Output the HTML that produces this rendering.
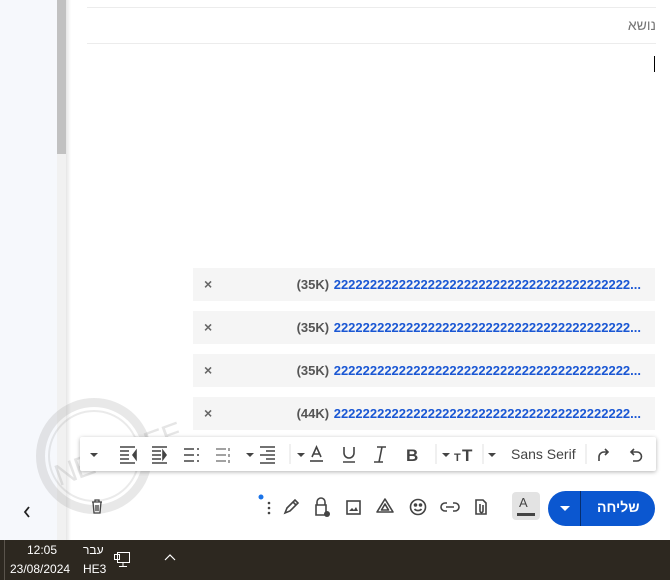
<!DOCTYPE html>
<html><head><meta charset="utf-8"><style>
*{margin:0;padding:0;box-sizing:border-box}
body{width:670px;height:580px;position:relative;overflow:hidden;background:#fff;font-family:"Liberation Sans",Arial,sans-serif}
.a{position:absolute}
.att{position:absolute;left:193px;width:462px;height:33px;background:#f5f5f5;font-size:13px;font-weight:bold}
.att .x{position:absolute;left:11px;top:8px;color:#666;font-size:14px}
.att .t{position:absolute;right:14px;top:9px;white-space:nowrap;color:#1a57d4;direction:ltr}
.att .t span{color:#555;margin-right:1px}
svg{position:absolute}
</style></head><body>
<div class="a" style="left:0;top:0;width:57px;height:540px;background:#f6f8fc"></div>
<div class="a" style="left:57px;top:0;width:10px;height:540px;background:#f1f1f1"></div>
<div class="a" style="left:57px;top:0;width:9px;height:154px;background:#c1c1c1"></div>
<div class="a" style="left:66px;top:0;width:5px;height:540px;background:linear-gradient(90deg,#e6e6e6,#fff)"></div>
<div class="a" style="left:87px;top:7px;width:569px;height:1px;background:#ececec"></div>
<div class="a" style="left:87px;top:43px;width:569px;height:1px;background:#ececec"></div>
<div class="a" style="right:14px;top:17px;font-size:14px;color:#757575;font-family:'Liberation Sans','Noto Sans CJK JP',sans-serif">נושא</div>
<div class="a" style="left:654px;top:56px;width:1px;height:16px;background:#000"></div>

<div class="att" style="top:268px"><div class="x">×</div><div class="t"><span>(35K)</span> 22222222222222222222222222222222222222222...</div></div>
<div class="att" style="top:311px"><div class="x">×</div><div class="t"><span>(35K)</span> 22222222222222222222222222222222222222222...</div></div>
<div class="att" style="top:354px"><div class="x">×</div><div class="t"><span>(35K)</span> 22222222222222222222222222222222222222222...</div></div>
<div class="att" style="top:397px"><div class="x">×</div><div class="t"><span>(44K)</span> 22222222222222222222222222222222222222222...</div></div>

<!-- watermark -->
<div class="a" style="left:36px;top:398px;width:116px;height:116px;border:9px solid rgba(150,150,150,.22);border-radius:50%"></div>
<div class="a" style="left:48px;top:410px;width:92px;height:92px;border:2px solid rgba(150,150,150,.2);border-radius:50%"></div>
<div class="a" style="left:52px;top:438px;font-size:30px;color:rgba(150,150,150,.25);transform:rotate(-20deg);letter-spacing:-1px">NETFREE</div>

<!-- toolbar -->
<div class="a" style="left:80px;top:437px;width:576px;height:34px;background:#fff;box-shadow:0 1px 4px rgba(0,0,0,.3);border-radius:2px"></div>
<svg style="left:80px;top:437px" width="576" height="34" fill="#444" stroke="#444">
<path d="M10 16l4 4 4-4z" stroke="none"/>
<g stroke-width="1.6" fill="none">
<path d="M40 10h15M40 14h9M40 18h9M40 22h9M40 26h15"/><path d="M56 14l-3 4 3 4z" fill="#444"/>
<path d="M72 10h15M72 14h9M72 18h9M72 22h9M72 26h15"/><path d="M83 14l3 4-3 4z" fill="#444"/>
<path d="M104 12h10M104 18h10M104 24h10M117 12h2M117 18h2M117 24h2"/>
<path d="M136 12h10M136 18h10M136 24h10M149 11v3M149 17v3M149 23v3" stroke-width="1"/>
<path d="M180 10h15M186 14h9M180 18h15M186 22h9M180 26h15"/>
<path d="M230 24h13"/><path d="M232 20l4.5-10 4.5 10M233.5 17h6"/>
<path d="M264 10v6a5 5 0 0010 0v-6M263 25h12"/>
<path d="M297 10h9M294 25h9M302 10l-3 15"/>
</g>
<path d="M166 16l4 4 4-4zM217 16l4 4 4-4zM362 16l4 4 4-4zM408 16l4 4 4-4z" stroke="none"/>
<text x="326" y="24" font-size="17" font-weight="bold" stroke="none" font-family="Liberation Sans">B</text>
<text x="382" y="24" font-size="17" font-weight="bold" stroke="none" font-family="Liberation Sans">T</text>
<text x="374" y="24" font-size="11" font-weight="bold" stroke="none" font-family="Liberation Sans">T</text>
<text x="431" y="22" font-size="14" stroke="none" fill="#444" font-family="Liberation Sans">Sans Serif</text>
<path d="M210 7v20M356 7v20M403 7v20M506 7v20" stroke="#e0e0e0"/>
<g fill="none" stroke-width="1.6">
<path d="M519 24v-4a5 5 0 015-5h4M525 12l3 3-3 3"/>
<path d="M554 12l-3 3 3 3M551 15h6a4 4 0 010 9h-4"/>
</g>
</svg>

<!-- bottom row -->
<svg style="left:20px;top:504px" width="14" height="16" fill="none" stroke="#222" stroke-width="1.8"><path d="M9 3l-4 5 4 5"/></svg>
<svg style="left:0;top:490px" width="670" height="40" fill="none" stroke="#444" stroke-width="1.6">
<path d="M92 12h10M95 12v-2h4v2M93 12l1 11h6l1-11M96 15v6M98 15v6" stroke-width="1.3"/>
<circle cx="261" cy="7" r="2.5" fill="#1a73e8" stroke="none"/>
<circle cx="269" cy="13" r="1.3" fill="#444" stroke="none"/><circle cx="269" cy="18" r="1.3" fill="#444" stroke="none"/><circle cx="269" cy="23" r="1.3" fill="#444" stroke="none"/>
<path d="M285 23l2-5 8-8 3 3-8 8z M293 12l3 3"/>
<path d="M317 15v-3a4 4 0 018 0v3M316 15h10v10h-10z"/><circle cx="327" cy="24" r="3" fill="#444" stroke="none"/>
<rect x="347" y="11" width="13" height="13"/><path d="M349 21l3-3 2 2 2-3 2 4z" fill="#444" stroke="none"/>
<path d="M385 9l8 13h-16z M385 14l3.5 6h-7z" stroke-linejoin="round"/>
<circle cx="418" cy="17" r="7.5"/><circle cx="415.5" cy="15" r="1" fill="#444"/><circle cx="420.5" cy="15" r="1" fill="#444"/><path d="M414.5 19a4 3 0 007 0"/>
<path d="M447 13h-2a4 4 0 000 8h2M453 13h2a4 4 0 010 8h-2M446 17h8"/>
<path d="M476 10h7l3 3v11h-10z M480 14v7a1.5 1.5 0 003 0v-6"/>
</svg>
<div class="a" style="left:512px;top:492px;width:28px;height:28px;background:#e3e3e3;border-radius:4px"></div>
<div class="a" style="left:519px;top:495px;font-size:13px;color:#444">A</div>
<div class="a" style="left:517px;top:513px;width:18px;height:3px;background:#444"></div>
<div class="a" style="left:548px;top:491px;width:107px;height:35px;background:#0b57d0;border-radius:18px"></div>
<div class="a" style="left:580px;top:491px;width:1px;height:35px;background:#062e6f"></div>
<svg style="left:558px;top:503px" width="14" height="10"><path d="M2 3l5 5 5-5z" fill="#fff"/></svg>
<div class="a" style="left:597px;top:499px;font-size:14px;font-weight:bold;color:#fff;font-family:'Liberation Sans','Noto Sans CJK JP',sans-serif">שליחה</div>

<!-- taskbar -->
<div class="a" style="left:0;top:540px;width:670px;height:40px;background:#2d2820"></div>
<div class="a" style="left:4px;top:540px;width:1px;height:40px;background:#5a544c"></div>
<div class="a" style="left:27px;top:543px;font-size:12px;color:#fff">12:05</div>
<div class="a" style="left:10px;top:562px;font-size:12px;color:#fff">23/08/2024</div>
<div class="a" style="left:83px;top:543px;font-size:12px;color:#fff;font-family:'Liberation Sans','Noto Sans CJK JP',sans-serif">עבר</div>
<div class="a" style="left:83px;top:562px;font-size:12px;color:#fff">HE3</div>
<svg style="left:112px;top:550px" width="20" height="20" fill="none" stroke="#fff" stroke-width="1"><path d="M5.5 2.5h12v10h-12zM11 12.5v4M7 16.5h8M2.5 4.5h5v5h-5z"/></svg>
<svg style="left:162px;top:552px" width="16" height="12" fill="none" stroke="#fff" stroke-width="1.2"><path d="M3 8l5-5 5 5"/></svg>
</body></html>
